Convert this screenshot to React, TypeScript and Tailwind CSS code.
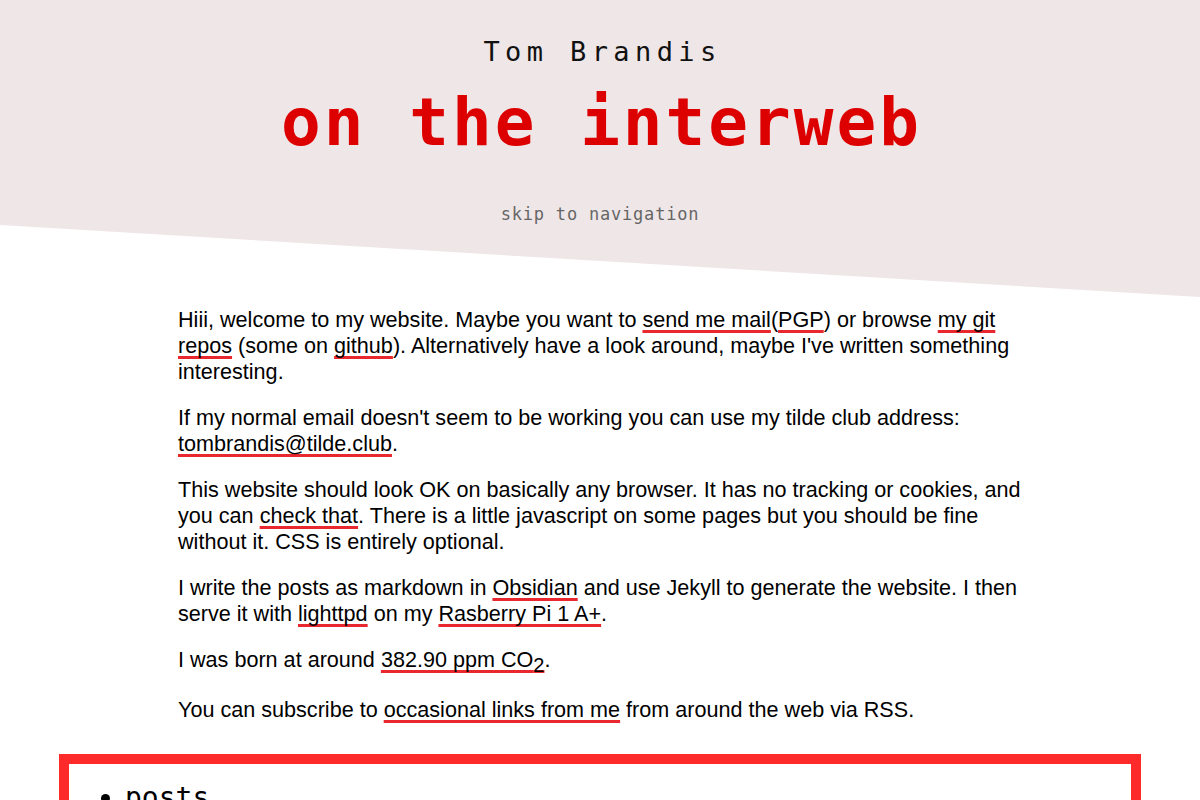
import React from "react";

const L = ({ children }: { children: React.ReactNode }) => (
  <a
    href="#"
    className="text-black underline decoration-[#e8282e] decoration-[3px] underline-offset-[3px] [text-decoration-skip-ink:none]"
  >
    {children}
  </a>
);

export default function App() {
  return (
    <div className="min-h-[800px] bg-white font-['Liberation_Sans',Arial,sans-serif] text-black">
      <header className="h-[297px] bg-[#efe6e7] [clip-path:polygon(0_0,100%_0,100%_297px,0_225px)] flex flex-col items-center font-['DejaVu_Sans_Mono',monospace]">
        <div className="mt-[33px] text-[27px] leading-[38px] tracking-[5.4px] text-[#111] pl-[5px]">
          Tom Brandis
        </div>
        <div className="mt-[19px] text-[66px] leading-[66px] font-bold tracking-[3px] text-[#dd0000] pl-[3px]">
          on the interweb
        </div>
        <a href="#" className="mt-[46px] text-[17px] leading-[24px] tracking-[0.8px] text-[#666]">
          skip to navigation
        </a>
      </header>

      <main className="w-[844px] mx-auto pt-[10px] text-[21.6px] leading-[26px]">
        <p>
          Hiii, welcome to my website. Maybe you want to <L>send me mail</L>(<L>PGP</L>) or browse{" "}
          <L>my git repos</L> (some on <L>github</L>). Alternatively have a look around, maybe I've written
          something interesting.
        </p>
        <p className="mt-[20px]">
          If my normal email doesn't seem to be working you can use my tilde club address:{" "}
          <L>tombrandis@tilde.club</L>.
        </p>
        <p className="mt-[20px]">
          This website should look OK on basically any browser. It has no tracking or cookies, and you can{" "}
          <L>check that</L>. There is a little javascript on some pages but you should be fine without it.
          CSS is entirely optional.
        </p>
        <p className="mt-[20px]">
          I write the posts as markdown in <L>Obsidian</L> and use Jekyll to generate the website. I then
          serve it with <L>lighttpd</L> on my <L>Rasberry Pi 1 A+</L>.
        </p>
        <p className="mt-[20px]">
          I was born at around{" "}
          <L>
            382.90 ppm CO<span className="text-[20px] align-sub">2</span>
          </L>
          .
        </p>
        <p className="mt-[19px]">
          You can subscribe to <L>occasional links from me</L> from around the web via RSS.
        </p>
      </main>

      <nav className="mt-[31px] mx-[59px] border-[10px] border-[#ff2b2b] pt-[14px] pb-[20px] px-[14px]">
        <ul className="list-disc pl-[42px] font-['DejaVu_Sans_Mono',monospace] text-[28px] leading-[40px]">
          <li>posts</li>
          <li>links</li>
          <li>about</li>
        </ul>
      </nav>
    </div>
  );
}
